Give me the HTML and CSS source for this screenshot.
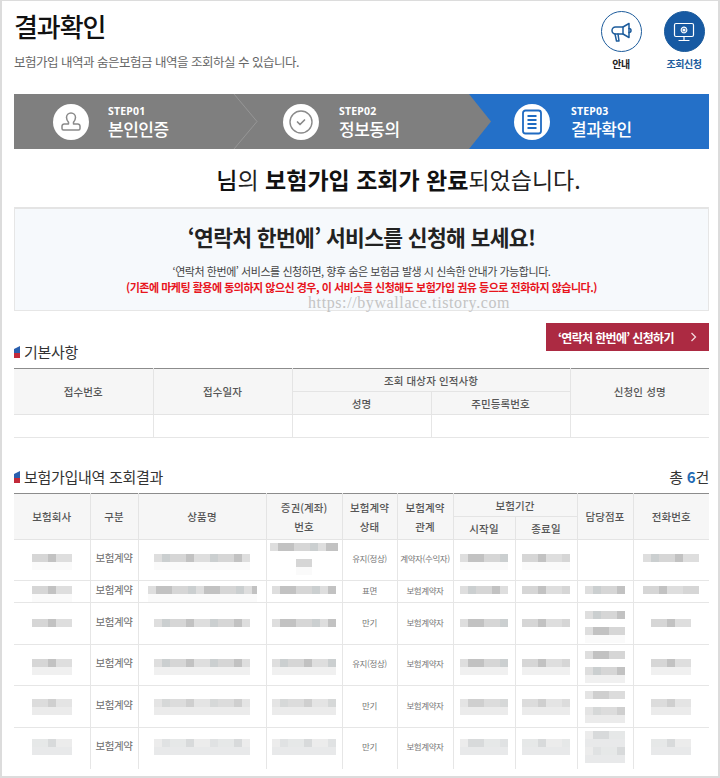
FILE: index.html
```html
<!DOCTYPE html>
<html lang="ko">
<head>
<meta charset="utf-8">
<title>결과확인</title>
<link rel="stylesheet" href="styles.css">
</head>
<body>
<div class="page">
  <header class="top">
    <div class="top-text">
      <h1>결과확인</h1>
      <p>보험가입 내역과 숨은보험금 내역을 조회하실 수 있습니다.</p>
    </div>
    <nav class="quick">
      <a class="quick-item">
        <span class="ring">
          <svg width="24" height="24" viewBox="0 0 24 24" fill="none" stroke="#1d5c9c" stroke-width="1.500" stroke-linejoin="round" stroke-linecap="round"><path d="M9 7h5l6-3.500v14L14 14H6.500a3.500 3.500 0 0 1 0-7z"/><path d="M14 7v7"/><path d="M20 8.500a2 2 0 0 1 2 2 2 2 0 0 1-2 2"/><path d="M6 14l1.500 7h2.500L9 14"/></svg>
        </span>
        <b>안내</b>
      </a>
      <a class="quick-item on">
        <span class="ring">
          <svg width="24" height="24" viewBox="0 0 24 24" fill="none" stroke="#fff" stroke-width="1.200" stroke-linecap="round" stroke-linejoin="round"><rect x="2.500" y="3.500" width="19" height="13" rx="1.500"/><circle cx="12" cy="10" r="2.800" stroke-dasharray="1.200 .6"/><circle cx="12" cy="10" r="1" fill="#fff"/><path d="M12 16.500v3.500M7 20.500h10"/></svg>
        </span>
        <b>조회신청</b>
      </a>
    </nav>
  </header>

  <ol class="steps">
    <li class="step">
      <span class="step-icon">
        <svg width="24" height="24" viewBox="0 0 24 24" fill="none" stroke="#8a8a8a" stroke-width="1.500" stroke-linejoin="round"><path d="M12 3a4.500 4.500 0 0 1 4.500 4.500c0 2.200-1 3.500-2 4.700v1.800h4.300a2.200 2.200 0 0 1 2.200 2.200v2.300a1.500 1.500 0 0 1-1.500 1.500h-15A1.500 1.500 0 0 1 3 18.500v-2.300A2.200 2.200 0 0 1 5.200 14h4.300v-1.800c-1-1.200-2-2.500-2-4.700A4.500 4.500 0 0 1 12 3z"/></svg>
      </span>
      <span class="step-text"><small>STEP01</small><strong>본인인증</strong></span>
      <svg class="chev" width="25" height="55" viewBox="0 0 25 55" fill="none" stroke="#969696" stroke-width="1"><path d="M1 0l23 27.500L1 55"/></svg>
    </li>
    <li class="step">
      <span class="step-icon">
        <svg width="26" height="26" viewBox="0 0 26 26" fill="none" stroke="#8a8a8a" stroke-width="1.400" stroke-linecap="round" stroke-linejoin="round"><circle cx="13" cy="13" r="11"/><path d="M9.500 13l2.500 2.500 4.500-4.500" stroke-width="1.700"/></svg>
      </span>
      <span class="step-text"><small>STEP02</small><strong>정보동의</strong></span>
    </li>
    <li class="step now">
      <span class="step-icon">
        <svg width="24" height="26" viewBox="0 0 24 26" fill="none" stroke="#1f6bc2" stroke-width="1.800" stroke-linejoin="round"><rect x="3" y="1.500" width="18" height="23" rx="2.500"/><path d="M7.500 7h9M7.500 11h9M7.500 15h9M7.500 19h9"/></svg>
      </span>
      <span class="step-text"><small>STEP03</small><strong>결과확인</strong></span>
    </li>
  </ol>

  <p class="done"><b class="med">님</b>의 <b>보험가입 조회가 완료</b>되었습니다.</p>

  <section class="promo">
    <h2>‘연락처 한번에’ 서비스를 신청해 보세요!</h2>
    <p>‘연락처 한번에’ 서비스를 신청하면, 향후 숨은 보험금 발생 시 신속한 안내가 가능합니다.</p>
    <p class="warn">(기존에 마케팅 활용에 동의하지 않으신 경우, 이 서비스를 신청해도 보험가입 권유 등으로 전화하지 않습니다.)</p>
    <span class="mark">https://bywallace.tistory.com</span>
  </section>

  <div class="sec-a">
    <h3><i class="flag"></i>기본사항</h3>
    <a class="apply"><span>‘연락처 한번에’ 신청하기</span><svg width="7" height="10" viewBox="0 0 7 10" fill="none" stroke="#f3d9de" stroke-width="1.300"><path d="M1.500 1l4 4-4 4"/></svg></a>
  </div>
  <table class="tb tb-a">
    <colgroup><col class="c139"><col class="c139"><col class="c139"><col class="c139"><col class="c139"></colgroup>
    <thead>
      <tr><th rowspan="2">접수번호</th><th rowspan="2">접수일자</th><th colspan="2">조회 대상자 인적사항</th><th rowspan="2">신청인 성명</th></tr>
      <tr><th>성명</th><th>주민등록번호</th></tr>
    </thead>
    <tbody>
      <tr class="blank"><td></td><td></td><td></td><td></td><td></td></tr>
    </tbody>
  </table>

  <div class="sec-b">
    <h3><i class="flag"></i>보험가입내역 조회결과</h3>
    <span class="total">총 <b>6</b>건</span>
  </div>
  <table class="tb tb-b">
    <colgroup><col class="c76"><col class="c48"><col class="c128"><col class="c76"><col class="c55"><col class="c56"><col class="c62"><col class="c62"><col class="c56"><col class="c76"></colgroup>
    <thead>
      <tr><th rowspan="2">보험회사</th><th rowspan="2">구분</th><th rowspan="2">상품명</th><th rowspan="2" class="two">증권(계좌)<br>번호</th><th rowspan="2" class="two">보험계약<br>상태</th><th rowspan="2" class="two">보험계약<br>관계</th><th colspan="2">보험기간</th><th rowspan="2">담당점포</th><th rowspan="2">전화번호</th></tr>
      <tr><th>시작일</th><th>종료일</th></tr>
    </thead>
    <tbody>
      <tr class="r r1">
        <td class="mc"><span class="mz w40 p1"></span></td><td>보험계약</td><td class="mc"><span class="mz w96 p2"></span></td>
        <td class="mc num2"><span class="mz w68 p3 one"></span><span class="mz w16 p1 gap"></span></td>
        <td class="sm">유지(정상)</td><td class="xs">계약자(수익자)</td>
        <td class="mc"><span class="mz w48 p3"></span></td><td class="mc"><span class="mz w48 p1"></span></td><td></td><td class="mc"><span class="mz w56 p2 one"></span></td>
      </tr>
      <tr class="r r2">
        <td class="mc"><span class="mz w40 p1"></span></td><td>보험계약</td><td class="mc"><span class="mz w109 p3"></span></td>
        <td class="mc"><span class="mz w64 p3 one"></span></td>
        <td class="sm">표면</td><td class="xs">보험계약자</td>
        <td class="mc"><span class="mz w48 p2 one"></span></td><td class="mc"><span class="mz w48 p1 one"></span></td><td class="mc"><span class="mz w40 p2 one"></span></td><td class="mc"><span class="mz w56 p1 one"></span></td>
      </tr>
      <tr class="r r3">
        <td class="mc"><span class="mz w40 p1 one"></span></td><td>보험계약</td><td class="mc"><span class="mz w96 p2 one"></span></td>
        <td class="mc"><span class="mz w64 p3 one"></span></td>
        <td class="sm">만기</td><td class="xs">보험계약자</td>
        <td class="mc"><span class="mz w48 p3 one"></span></td><td class="mc"><span class="mz w48 p1 one"></span></td>
        <td class="mc bn"><span class="mz w40 p2 one"></span><span class="mz w40 p3 gap"></span></td><td class="mc"><span class="mz w40 p1 one"></span></td>
      </tr>
      <tr class="r r4">
        <td class="mc"><span class="mz w40 p1"></span></td><td>보험계약</td><td class="mc"><span class="mz w96 p2"></span></td>
        <td class="mc"><span class="mz w64 p2"></span></td>
        <td class="sm">유지(정상)</td><td class="xs">보험계약자</td>
        <td class="mc"><span class="mz w48 p3"></span></td><td class="mc"><span class="mz w48 p1"></span></td>
        <td class="mc bn"><span class="mz w40 p3 one"></span><span class="mz w40 p2 gap"></span></td><td class="mc"><span class="mz w40 p1"></span></td>
      </tr>
      <tr class="r r5">
        <td class="mc"><span class="mz w40 p1"></span></td><td>보험계약</td><td class="mc"><span class="mz w96 p2"></span></td>
        <td class="mc"><span class="mz w64 p2"></span></td>
        <td class="sm">만기</td><td class="xs">보험계약자</td>
        <td class="mc"><span class="mz w48 p3"></span></td><td class="mc"><span class="mz w48 p1"></span></td>
        <td class="mc bn"><span class="mz w40 p3 one"></span><span class="mz w40 p2 gap"></span></td><td class="mc"><span class="mz w40 p1"></span></td>
      </tr>
      <tr class="r r6">
        <td class="mc"><span class="mz w40 p1"></span></td><td>보험계약</td><td class="mc"><span class="mz w96 p2"></span></td>
        <td class="mc"><span class="mz w64 p2"></span></td>
        <td class="sm">만기</td><td class="xs">보험계약자</td>
        <td class="mc"><span class="mz w48 p3"></span></td><td class="mc"><span class="mz w48 p1"></span></td>
        <td class="mc bn"><span class="mz w40 p3"></span><span class="mz w40 p2"></span></td><td class="mc"><span class="mz w40 p1"></span></td>
      </tr>
    </tbody>
  </table>
</div>
</body>
</html>
```
FILE: styles.css
```css
* { box-sizing: border-box; }
html, body { margin: 0; padding: 0; }
body {
  font-family: "Noto Sans CJK KR", "Noto Sans", sans-serif;
  color: #222;
  background: #fff;
}
.page {
  width: 720px;
  height: 778px;
  overflow: hidden;
  border: solid #dcdcdc;
  border-width: 1px 2px 2px 2px;
  padding: 0 9px 0 12px;
}

/* header */
.top {
  display: flex;
  justify-content: space-between;
  height: 93px;
}
.top-text h1 {
  margin: 6px 0 0;
  font-size: 26px;
  line-height: 38px;
  font-weight: 500;
  letter-spacing: -1.100px;
  color: #111;
}
.top-text p {
  margin: 7px 0 0;
  font-size: 12.500px;
  line-height: 20px;
  letter-spacing: -.5px;
  color: #666;
}
.quick {
  display: flex;
  gap: 19px;
  padding: 10px 3px 0 0;
}
.quick-item {
  display: flex;
  flex-direction: column;
  align-items: center;
  width: 44px;
  font-size: 10px;
  line-height: 14px;
  letter-spacing: -.4px;
  color: #222;
}
.quick-item b { margin-top: 5px; font-weight: 700; }
.ring {
  display: flex;
  align-items: center;
  justify-content: center;
  width: 41px;
  height: 41px;
  border: 1.500px solid #1d5c9c;
  border-radius: 50%;
}
.on { color: #1d5c9c; }
.on .ring { background: #175aa3; }

/* steps */
.steps {
  display: flex;
  height: 55px;
  margin: 0;
  padding: 0;
  list-style: none;
  background: #7f7f7f;
  color: #fff;
}
.step {
  position: relative;
  display: flex;
  align-items: center;
  gap: 20px;
  flex: 0 0 231px;
  padding-left: 38px;
}
.step:first-child { padding-left: 39px; gap: 19px; }
.step:nth-child(2) { flex: 0 0 224px; }
.step.now { flex: 0 0 240px; padding-left: 45px; gap: 21px; background: #2470c8; }
.step.now::before {
  content: "";
  position: absolute;
  left: 0;
  top: 0;
  width: 22px;
  height: 100%;
  background: #7f7f7f;
  clip-path: polygon(0 0, 100% 50%, 0 100%);
}
.chev { position: absolute; right: -13px; top: 0; }
.step-icon {
  position: relative;
  display: flex;
  align-items: center;
  justify-content: center;
  width: 36px;
  height: 36px;
  background: #fff;
  border-radius: 50%;
}
.step-text { position: relative; display: flex; flex-direction: column; }
.step-text small {
  font-size: 10.500px;
  line-height: 14px;
  font-weight: 700;
  letter-spacing: .2px;
  font-family: "Noto Sans", sans-serif;
}
.step-text strong {
  font-size: 17px;
  line-height: 22px;
  font-weight: 500;
  letter-spacing: -.5px;
}

/* done */
.done {
  margin: 13px 0 0;
  height: 34px;
  padding-left: 74px;
  text-align: center;
  font-size: 23px;
  line-height: 34px;
  letter-spacing: 0;
  color: #222;
}
.done b { font-weight: 700; color: #111; }
.done .med { font-weight: 500; }

/* promo */
.promo {
  position: relative;
  height: 104px;
  margin-top: 11px;
  border: 1px solid #e6e6e6;
  border-top: 2px solid #e4e4e4;
  background: #f6f9fc;
  text-align: center;
}
.promo h2 {
  margin: 13px 0 0;
  font-size: 21.500px;
  line-height: 30px;
  font-weight: 700;
  letter-spacing: -.65px;
  color: #222;
}
.promo p {
  margin: 0;
  font-size: 11px;
  line-height: 16px;
  letter-spacing: -.45px;
  color: #444;
}
.promo h2 + p { margin-top: 11px; }
.promo .warn {
  font-weight: 700;
  color: #e8141c;
  letter-spacing: -.49px;
}
.mark {
  position: absolute;
  left: 293px;
  top: 85px;
  font-family: "Liberation Serif", serif;
  font-size: 16px;
  line-height: 18px;
  letter-spacing: .6px;
  color: #c4c4c4;
}

/* section heads */
.sec-a, .sec-b {
  display: flex;
  justify-content: space-between;
}
.sec-a { height: 57px; padding-top: 12px; align-items: flex-start; }
.sec-b { height: 55px; align-items: flex-end; padding-bottom: 5px; }
h3 {
  display: flex;
  align-items: center;
  gap: 4px;
  margin: 0;
  font-size: 15px;
  line-height: 22px;
  font-weight: 400;
  letter-spacing: -.3px;
  color: #333;
}
.sec-a h3 { margin-top: 18px; }
.flag {
  display: block;
  width: 6px;
  height: 12px;
  background: linear-gradient(#2a5fae 0 60%, #c22a3a 60%);
  clip-path: polygon(0 25%, 100% 0, 100% 100%, 0 100%);
}
.apply {
  display: flex;
  align-items: center;
  justify-content: space-between;
  width: 163px;
  height: 28px;
  padding: 0 12px;
  background: #ac2a42;
  color: #fff;
  font-size: 12px;
  font-weight: 700;
  letter-spacing: -.65px;
}
.total { font-size: 15px; line-height: 22px; letter-spacing: -.2px; color: #333; }
.total b { color: #1f6bb5; font-weight: 700; }

/* tables */
.tb {
  width: 695px;
  border-collapse: collapse;
  table-layout: fixed;
  border-top: 1.500px solid #8c8c8c;
}
.c139 { width: 139px; }
.c76 { width: 76px; }
.c48 { width: 48px; }
.c128 { width: 128px; }
.c55 { width: 55px; }
.c56 { width: 56px; }
.c62 { width: 62px; }
.tb th {
  padding: 0;
  background: #f6f6f6;
  font-size: 10.500px;
  font-weight: 500;
  letter-spacing: .1px;
  color: #555;
  text-align: center;
  border: 1px solid #e4e4e4;
}
.tb th:first-child, .tb td:first-child { border-left: 0; }
.tb th:last-child, .tb td:last-child { border-right: 0; }
.tb thead { border-bottom: 1.500px solid #8c8c8c; }
.tb thead tr:first-child th { border-top: 0; }
.tb-a thead tr { height: 23px; }
.tb td {
  padding: 0 0 4px;
  border: 1px solid #e6e6e6;
  text-align: center;
  font-size: 10.500px;
  line-height: 14px;
  color: #6c6c6c;
  letter-spacing: -.4px;
}
.blank { height: 23px; }
.tb-b thead tr { height: 23px; }
.tb-b .two { line-height: 19px; padding-top: 1px; }
.tb-b td.sm { font-size: 8.500px; color: #777; }
.tb-b td.xs { font-size: 8.500px; color: #777; letter-spacing: -.4px; }
.tb-b tr:last-child td { border-bottom: 0; }

/* mosaic (blurred personal data) */
.r {
  --a: #d6d6d6; --b: #c2c2c2; --c: #dedede; --d: #cbcfd0;
  --f: #fafafa;
}
.r1 { height: 41px; }
.r2 { height: 21px; }
.r3 { height: 42px; }
.r4 { height: 41px; --f: #f0f0f0; }
.r5 { height: 42px; --a: #dcdcdc; --b: #cfcfcf; --c: #e4e4e4; --d: #d6d8d8; --f: #ebebeb; }
.r6 { height: 41px; --a: #e6e8e8; --b: #d8dadb; --c: #ececec; --d: #e0e2e3; --f: #e8e9ea; }
.tb td.mc { vertical-align: top; padding-bottom: 0; }
.r1 td.mc { padding-top: 14px; }
.r2 td.mc { padding-top: 5px; }
.r3 td.mc { padding-top: 16px; }
.r4 td.mc { padding-top: 14px; }
.r5 td.mc { padding-top: 13px; }
.r6 td.mc { padding-top: 11px; }
.r1 td.num2 { padding-top: 3px; }
.r3 td.bn { padding-top: 8px; }
.r4 td.bn { padding-top: 6px; }
.r5 td.bn { padding-top: 5px; }
.r6 td.bn { padding-top: 3px; }
.mz {
  display: block;
  height: 16px;
  margin: 0 auto;
  background-repeat: no-repeat, no-repeat;
  background-size: 100% 8px, 100% 8px;
  background-position: 0 0, 0 8px;
  filter: blur(.4px);
}
.mz.one { height: 8px; background-size: 100% 8px, 0 0; }
.gap { margin-top: 8px; height: 16px; }
.p1 {
  background-image:
    repeating-linear-gradient(90deg, var(--a) 0 16px, var(--b) 16px 24px, var(--c) 24px 40px),
    linear-gradient(var(--f), var(--f));
}
.p2 {
  background-image:
    repeating-linear-gradient(90deg, var(--c) 0 8px, var(--d) 8px 16px, var(--a) 16px 32px, var(--b) 32px 40px, var(--c) 40px 48px),
    linear-gradient(var(--f), var(--f));
}
.p3 {
  background-image:
    repeating-linear-gradient(90deg, var(--c) 0 8px, var(--b) 8px 24px, var(--a) 24px 40px, var(--d) 40px 48px),
    linear-gradient(var(--f), var(--f));
}
.w16 { width: 16px; }
.w40 { width: 40px; }
.w48 { width: 48px; }
.w56 { width: 56px; }
.w64 { width: 64px; }
.w68 { width: 68px; }
.w96 { width: 96px; }
.w109 { width: 109px; }
```
